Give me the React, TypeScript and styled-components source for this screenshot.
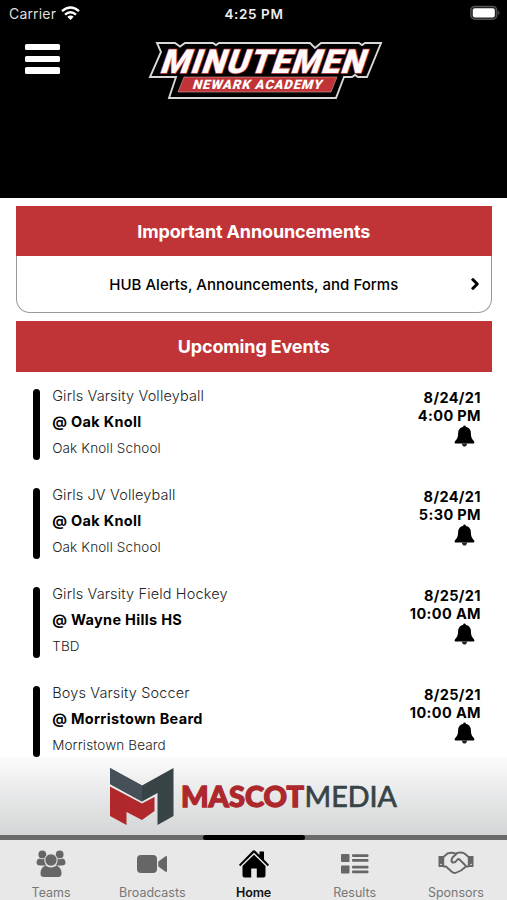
import React from "react";
import styled, { createGlobalStyle } from "styled-components";

const RED = "#c03437";

const GlobalStyle = createGlobalStyle`
  * { box-sizing: border-box; }
  body {
    margin: 0;
    background: #fff;
    font-family: Inter, "Liberation Sans", sans-serif;
    color: #000;
  }
`;

const Screen = styled.div`
  width: 507px;
  height: 900px;
  overflow: hidden;
  display: flex;
  flex-direction: column;
  background: #fff;
`;

const Header = styled.header`
  height: 198px;
  flex: none;
  background: #000;
  color: #fff;
`;

const StatusBar = styled.div`
  height: 28px;
  padding: 0 6px 0 9px;
  display: grid;
  grid-template-columns: 1fr auto 1fr;
  align-items: center;
`;

const Carrier = styled.div`
  display: flex;
  align-items: center;
  gap: 5px;
  font-size: 14px;
  letter-spacing: 0.17px;
  line-height: 26px;
  color: #dedede;

  svg { margin-top: -2px; }
`;

const Clock = styled.div`
  font-size: 13.5px;
  font-weight: 600;
  letter-spacing: 0.6px;
  padding-right: 2px;
  color: #eee;
`;

const BatterySlot = styled.div`
  display: flex;
  justify-content: flex-end;
  margin-top: -2px;
`;

const Brand = styled.div`
  display: flex;
  padding: 12px 0 0 25px;
`;

const MenuButton = styled.button`
  width: 35px;
  height: 33px;
  margin: 4px 88px 0 0;
  padding: 0;
  border: 0;
  background: none;
  display: flex;
  flex-direction: column;
  gap: 5.3px;
`;

const MenuBar = styled.span`
  display: block;
  width: 35px;
  height: 6.4px;
  border-radius: 1.5px;
  background: #fff;
`;

const Content = styled.main`
  height: 559px;
  flex: none;
  overflow: hidden;
  padding: 8px 15.5px 0 16px;
`;

const Banner = styled.h2`
  margin: 0;
  height: 50.3px;
  display: flex;
  align-items: center;
  justify-content: center;
  background: ${RED};
  color: #fff;
  font-size: 18px;
  font-weight: 700;
  letter-spacing: -0.14px;
`;

const Announcement = styled.div`
  height: 57px;
  margin-bottom: 8px;
  display: grid;
  grid-template-columns: 1fr auto 1fr;
  align-items: center;
  padding: 0 11px;
  border: 1px solid #999;
  border-top: 0;
  border-radius: 0 0 14px 14px;
  font-size: 15px;
  font-weight: 500;
  letter-spacing: 0.02px;

  span { grid-column: 2; }
  svg { justify-self: end; }
`;

const Events = styled.div`
  padding: 17px 10.5px 0 16.5px;
  display: flex;
  flex-direction: column;
  gap: 28px;
`;

const EventRow = styled.article`
  height: 71px;
  flex: none;
  display: flex;
`;

const Marker = styled.div`
  width: 7.5px;
  height: 71px;
  border-radius: 4px;
  background: #000;
  margin-right: 12.2px;
`;

const Details = styled.div`
  flex: 1;
  margin-top: -6px;
  line-height: 26px;
  white-space: nowrap;
`;

const Sport = styled.div`
  font-size: 14.5px;
  font-weight: 300;
  letter-spacing: 0.14px;
  color: #222;
`;

const Opponent = styled.div`
  font-size: 14.5px;
  font-weight: 700;
  letter-spacing: 0.32px;
`;

const Venue = styled.div`
  font-size: 13.5px;
  font-weight: 300;
  letter-spacing: 0.13px;
  color: #222;
`;

const When = styled.div`
  display: flex;
  flex-direction: column;
  align-items: flex-end;
  font-size: 14.5px;
  font-weight: 700;
  line-height: 18px;
  letter-spacing: 0.37px;

  svg { margin: 0 6.500px 0 0; }
`;

const Sponsor = styled.div`
  height: 78px;
  flex: none;
  background: linear-gradient(#fbfbfb, #d3d5d6);
  svg { display: block; }
`;

const TabLine = styled.div`
  height: 5px;
  flex: none;
  background: #6b6b6b;
  display: flex;
  justify-content: center;
`;

const ActiveLine = styled.div`
  width: 102px;
  border-radius: 3px;
  background: #000;
`;

const Tabs = styled.nav`
  height: 60px;
  flex: none;
  display: grid;
  grid-template-columns: repeat(5, 101.2px);
  justify-content: center;
  background: #e8e8e8;
`;

const Tab = styled.div<{ $active?: boolean }>`
  display: flex;
  flex-direction: column;
  align-items: center;
  color: ${(p) => (p.$active ? "#000" : "#666")};
  font-size: 12.5px;
  font-weight: ${(p) => (p.$active ? 600 : 400)};
  letter-spacing: ${(p) => (p.$active ? -0.1 : 0)}px;
`;

const TabIcon = styled.div`
  height: 42px;
  padding-top: 6px;
  display: flex;
  align-items: center;
`;

const TabLabel = styled.span<{ $active?: boolean }>`
  line-height: 20px;
  margin-top: 1px;
  color: ${(p) => (p.$active ? "#111" : "#777")};
`;

const WifiIcon = () => (
  <svg width="19" height="15" viewBox="0 0 19 15" fill="none" stroke="#fff" strokeWidth="2.4">
    <path d="M1 5.1Q9.5-2 18 5.1" />
    <path d="M4 8.700Q9.5 4 15 8.700" />
    <path d="M9.5 14L6.300 10.800Q9.5 8.200 12.700 10.800Z" fill="#fff" stroke="none" />
  </svg>
);

const BatteryIcon = () => (
  <svg width="31" height="16" viewBox="0 0 31 16">
    <rect x=".8" y="1.300" width="26" height="13" rx="4" fill="#222" stroke="#555" strokeWidth="1.3" />
    <rect x="2.8" y="3.200" width="22" height="9.200" rx="2" fill="#fff" />
    <path d="M28.3 5.4Q30.6 7.8 28.3 10.2Z" fill="#666" />
  </svg>
);

const TeamLogo = () => (
  <svg width="236" height="62" viewBox="148 40 236 62">
    <path
      d="M157 43H175L180 46.5L185 43H213L216 45L219 43H310L315 48L321 43H359L362 45L365 43H381L367 77H358L355 75L352 77H344L336 98H169L176 77H150L161 52Z"
      fill="#000"
      stroke="#d8d8d8"
      strokeWidth="1.9"
    />
    <path d="M184 77H337L331 92H178Z" fill={RED} stroke="#d9a2a2" strokeWidth=".6" />
    <g transform="translate(159 73) skewX(-19)">
      <text
        fontFamily="Roboto, sans-serif"
        fontWeight="900"
        fontSize="33"
        textLength="205"
        lengthAdjust="spacingAndGlyphs"
        letterSpacing="1.2"
        fill="#fffafa"
        stroke="#c84a4d"
        strokeWidth="1.6"
        paintOrder="stroke"
      >
        MINUTEMEN
      </text>
    </g>
    <g transform="translate(192 89.200) skewX(-16)">
      <text
        fontFamily="Roboto, sans-serif"
        fontWeight="900"
        fontSize="13"
        textLength="130"
        lengthAdjust="spacingAndGlyphs"
        letterSpacing=".9"
        fill="#fff"
      >
        NEWARK ACADEMY
      </text>
    </g>
  </svg>
);

const MascotLogo = () => (
  <svg width="507" height="78" viewBox="0 757 507 78">
    <path d="M110 768L142 785.500L173.500 768V816L157.500 825V793L142 801.500L110 784Z" fill="#374345" />
    <path d="M110 768L142 785.500V801.500L110 784Z" fill="#465058" />
    <path d="M110 786.500L142 803.500L154.500 797V811L142 820L126.500 812V825L110 816Z" fill="#b0282c" />
    <g fontFamily="Lato, sans-serif" fontSize="29">
      <text x="181" y="806.500" fontWeight="900" fill="#ad282c" stroke="#ad282c" strokeWidth="1.3" textLength="123" lengthAdjust="spacingAndGlyphs">MASCOT</text>
      <text x="304.500" y="806.500" fontWeight="400" fill="#374345" stroke="#374345" strokeWidth=".7" textLength="92.500" lengthAdjust="spacingAndGlyphs">MEDIA</text>
    </g>
  </svg>
);

const TeamsIcon = () => (
  <svg width="30" height="28" viewBox="0 0 30 28" fill="currentColor">
    <circle cx="6.300" cy="4.400" r="3.900" />
    <circle cx="23.700" cy="4.400" r="3.900" />
    <path d="M3 8.500Q6 10 9 8.500Q8 12 10 15.500H4Q.5 15.500.5 12.500Q.5 9.500 3 8.500Z" />
    <path d="M27 8.500Q24 10 21 8.500Q22 12 20 15.500H26Q29.500 15.500 29.500 12.500Q29.500 9.500 27 8.500Z" />
    <circle cx="15" cy="10" r="6.200" stroke="#e8e8e8" strokeWidth="1" />
    <path d="M9.500 15.500Q15 19.500 20.500 15.500Q25.500 17.500 25.500 23.500Q25.500 27 22 27H8Q4.500 27 4.500 23.500Q4.500 17.500 9.500 15.500Z" />
  </svg>
);

const CameraIcon = () => (
  <svg width="32" height="20" viewBox="0 0 32 20" fill="currentColor">
    <rect x="1" y="1" width="20" height="18" rx="4" />
    <path d="M22.300 7.500L29.500 2.200Q31 1.700 31 3.200V16.800Q31 18.300 29.500 17.800L22.300 12.500Z" />
  </svg>
);

const HomeIcon = () => (
  <svg width="32" height="30" viewBox="0 0 32 30" fill="currentColor">
    <path d="M1 15.800L14.500 2Q16 .7 17.500 2L21.500 6V2.500H26V10.500L31 15.800L29.800 17.200L16 3.800L2.200 17.200Z" />
    <path d="M16 5.800L27.500 17V26.500Q27.500 28.500 25.500 28.500H18.800V19.500H13.200V28.500H6.500Q4.500 28.500 4.500 26.500V17Z" />
  </svg>
);

const ResultsIcon = () => (
  <svg width="28" height="20" viewBox="0 0 28 20" fill="currentColor">
    <rect width="8.500" height="8" rx=".7" />
    <rect y="11.500" width="8.500" height="8" rx=".7" />
    {[0.3, 5, 11.8, 16.5].map((y) => (
      <rect key={y} x="11" y={y} width="16.500" height="2.700" rx="1" />
    ))}
  </svg>
);

const HandshakeIcon = () => (
  <svg width="36" height="26" viewBox="0 0 36 26" fill="none" stroke="currentColor" strokeWidth="1.900" strokeLinejoin="round" strokeLinecap="round">
    <path d="M.5 5H6.200V16H.5ZM29.800 5H35.500V16H29.800Z" fill="currentColor" stroke="none" />
    <circle cx="3" cy="13.500" r=".8" fill="#e8e8e8" stroke="none" />
    <circle cx="33" cy="13.500" r=".8" fill="#e8e8e8" stroke="none" />
    <path d="M6 5.500L9.500 2.500Q14 .8 17.500 2.800L19.500 1.800Q23.500 .8 26.500 2.500L30 5.500" />
    <path d="M6 15.500H8L13.500 20.500Q16 22.800 18.500 21.500L23 19.500L28 15.500H30" />
    <path d="M18.500 2.800L14.500 6.500Q12.500 9.800 14.300 11.300Q17 12.500 19.500 8.500L21 8L27.500 14.500" />
  </svg>
);

const BellIcon = () => (
  <svg width="21" height="22" viewBox="0 0 21 22">
    <circle cx="10.500" cy="1.800" r="1.300" />
    <path d="M10.500 1.800Q16.700 2 16.900 8.500Q16.900 13.500 19.800 16Q21.200 18.200 19.500 18.600H1.500Q-.2 18.200 1.200 16Q4.100 13.500 4.100 8.500Q4.300 2 10.500 1.800Z" />
    <path d="M7.800 18.500H13.200Q12.700 21.600 10.500 21.600Q8.300 21.600 7.800 18.500Z" fill="#222" />
  </svg>
);

const ChevronIcon = () => (
  <svg width="10" height="14" viewBox="0 0 10 14" fill="none" stroke="#000" strokeWidth="3">
    <path d="M2 1.700L7.300 7L2 12.300" strokeLinejoin="round" />
  </svg>
);

const events = [
  { sport: "Girls Varsity Volleyball", opponent: "@ Oak Knoll", venue: "Oak Knoll School", date: "8/24/21", time: "4:00 PM" },
  { sport: "Girls JV Volleyball", opponent: "@ Oak Knoll", venue: "Oak Knoll School", date: "8/24/21", time: "5:30 PM" },
  { sport: "Girls Varsity Field Hockey", opponent: "@ Wayne Hills HS", venue: "TBD", date: "8/25/21", time: "10:00 AM" },
  { sport: "Boys Varsity Soccer", opponent: "@ Morristown Beard", venue: "Morristown Beard", date: "8/25/21", time: "10:00 AM" },
];

const tabs = [
  { label: "Teams", icon: <TeamsIcon /> },
  { label: "Broadcasts", icon: <CameraIcon /> },
  { label: "Home", icon: <HomeIcon />, active: true },
  { label: "Results", icon: <ResultsIcon /> },
  { label: "Sponsors", icon: <HandshakeIcon /> },
];

export default function App() {
  return (
    <Screen>
      <GlobalStyle />
      <Header>
        <StatusBar>
          <Carrier>Carrier <WifiIcon /></Carrier>
          <Clock>4:25 PM</Clock>
          <BatterySlot><BatteryIcon /></BatterySlot>
        </StatusBar>
        <Brand>
          <MenuButton aria-label="Menu"><MenuBar /><MenuBar /><MenuBar /></MenuButton>
          <TeamLogo />
        </Brand>
      </Header>
      <Content>
        <Banner>Important Announcements</Banner>
        <Announcement>
          <span>HUB Alerts, Announcements, and Forms</span>
          <ChevronIcon />
        </Announcement>
        <Banner>Upcoming Events</Banner>
        <Events>
          {events.map((e, i) => (
            <EventRow key={i}>
              <Marker />
              <Details>
                <Sport>{e.sport}</Sport>
                <Opponent>{e.opponent}</Opponent>
                <Venue>{e.venue}</Venue>
              </Details>
              <When>
                <div>{e.date}</div>
                <div>{e.time}</div>
                <BellIcon />
              </When>
            </EventRow>
          ))}
        </Events>
      </Content>
      <Sponsor><MascotLogo /></Sponsor>
      <TabLine><ActiveLine /></TabLine>
      <Tabs>
        {tabs.map((t) => (
          <Tab key={t.label} $active={t.active}>
            <TabIcon>{t.icon}</TabIcon>
            <TabLabel $active={t.active}>{t.label}</TabLabel>
          </Tab>
        ))}
      </Tabs>
    </Screen>
  );
}
